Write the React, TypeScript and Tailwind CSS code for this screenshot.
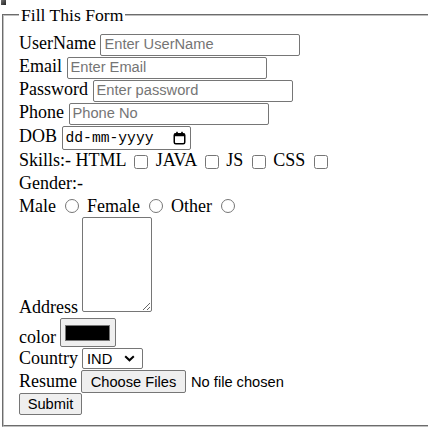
const sans = "font-['Liberation_Sans',Arial,sans-serif] text-[14.67px]";
const textField = `${sans} h-[22px] w-[200px] rounded-[2px] border border-[#767676] bg-white px-[3px] align-middle text-black placeholder:text-[#757575] outline-none`;
const greyBtn = `${sans} h-[22px] rounded-[2px] border border-[#767676] bg-[#efefef] text-black leading-[20px]`;
const checkbox = "align-middle w-[14px] h-[14px] mt-[3px] mr-[3px] mb-[3px] ml-[4px]";
const radio = "align-middle w-[14px] h-[14px] mb-[4px] mr-[3px] ml-[5px]";
const row = "h-[23px] leading-[23px] whitespace-nowrap";

const CalendarIcon = () => (
  <svg width="13" height="14" viewBox="0 0 13 14" className="shrink-0">
    <rect x="1.25" y="2.75" width="10.5" height="10" rx="1.5" fill="none" stroke="#000" strokeWidth="1.5" />
    <rect x="1.25" y="2.75" width="10.5" height="2.5" fill="#000" />
    <rect x="3.2" y="0.8" width="1.6" height="2.6" fill="#000" />
    <rect x="8.2" y="0.8" width="1.6" height="2.6" fill="#000" />
  </svg>
);

export default function App() {
  return (
    <div className="min-h-[447px] w-[428px] overflow-hidden bg-white font-['Liberation_Serif','Times_New_Roman',serif] text-[18px] text-black">
      {/* broken image */}
      <div className="ml-[1px] h-[5px] w-[5px] bg-gradient-to-br from-[#777] to-[#222]" />

      <fieldset className="ml-[2px] w-[450px] border-2 border-[#c0c0c0] [border-style:groove] pt-[7px] pl-[15px] pb-[10px]">
        <legend className="px-[2px] text-[17.6px] leading-[20px]">Fill This Form</legend>

        <div className={row}>
          UserName{" "}
          <input type="text" placeholder="Enter UserName" className={textField} />
        </div>
        <div className={row}>
          Email{" "}
          <input type="email" placeholder="Enter Email" className={textField} />
        </div>
        <div className={row}>
          Password{" "}
          <input type="password" placeholder="Enter password" className={textField} />
        </div>
        <div className={row}>
          Phone{" "}
          <input type="tel" placeholder="Phone No" className={textField} />
        </div>
        <div className="h-[25px] leading-[25px] whitespace-nowrap">
          DOB{" "}
          <span className="inline-flex h-[24px] w-[129px] items-center justify-between rounded-[2px] border border-[#767676] bg-white pl-[3px] pr-[4px] align-middle font-['Liberation_Mono','DejaVu_Sans_Mono',monospace] text-[14.67px] leading-none">
            <span>dd-mm-yyyy</span>
            <CalendarIcon />
          </span>
        </div>
        <div className={row}>
          Skills:- HTML{" "}
          <input type="checkbox" className={checkbox} />{" "}
          JAVA{" "}
          <input type="checkbox" className={checkbox} />{" "}
          JS{" "}
          <input type="checkbox" className={checkbox} />{" "}
          CSS{" "}
          <input type="checkbox" className={checkbox} />
        </div>
        <div className={row}>Gender:-</div>
        <div className="h-[22px] leading-[22px] whitespace-nowrap">
          Male{" "}
          <input type="radio" name="gender" className={radio} />{" "}
          Female{" "}
          <input type="radio" name="gender" className={radio} />{" "}
          Other{" "}
          <input type="radio" name="gender" className={radio} />
        </div>
        <div className="flex h-[100px] items-end gap-[4px] whitespace-nowrap">
          <span className="leading-[20px]">Address</span>
          <textarea className="mb-[5px] h-[95px] w-[70px] resize rounded-[2px] border border-[#767676] bg-white" />
        </div>
        <div className="flex h-[30px] items-end gap-[4px] whitespace-nowrap">
          <span className="leading-[20px]">color</span>
          <div className="flex h-[29px] w-[56px] items-center justify-center rounded-[2px] border border-[#767676] bg-[#efefef]">
            <div className="h-[16px] w-[45px] border border-[#777] bg-black" />
          </div>
        </div>
        <div className="flex h-[23px] items-center gap-[4px] whitespace-nowrap">
          <span>Country</span>
          <div className={`${sans} flex h-[21px] w-[61px] items-center justify-between rounded-[2px] border border-[#767676] bg-white pl-[4px] pr-[7px]`}>
            <span>IND</span>
            <svg width="11" height="7" viewBox="0 0 11 7">
              <path d="M1.2 1.2 L5.5 5.3 L9.8 1.2" fill="none" stroke="#000" strokeWidth="2" />
            </svg>
          </div>
        </div>
        <div className="flex h-[23px] items-center whitespace-nowrap">
          <span className="mr-[4px]">Resume</span>
          <button type="button" className={`${greyBtn} h-[23px] w-[105px]`}>Choose Files</button>
          <span className={`${sans} ml-[5px]`}>No file chosen</span>
        </div>
        <div className="flex h-[22px] items-start">
          <button type="submit" className={`${greyBtn} w-[63px]`}>Submit</button>
        </div>
      </fieldset>
    </div>
  );
}
